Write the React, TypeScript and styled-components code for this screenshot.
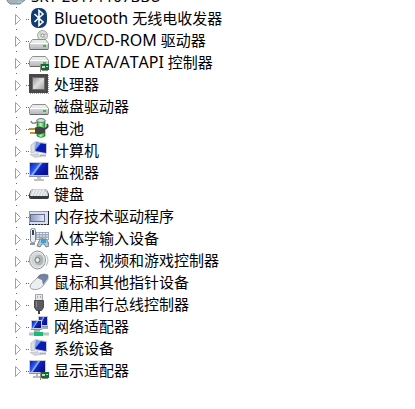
import React from "react";
import styled, { createGlobalStyle } from "styled-components";

const GlobalStyle = createGlobalStyle`
  * { box-sizing: border-box; }
  body {
    margin: 0;
    background: #fff;
    color: #000;
    font: 15px/20px "Noto Sans", "Noto Sans CJK SC", sans-serif;
    font-kerning: none;
  }
`;

const Viewport = styled.main`
  height: 100vh;
  overflow: hidden;
`;
const Tree = styled.div`
  margin-top: -14px;
`;
const RootRow = styled.div`
  display: flex;
  align-items: flex-start;
  height: 22px;
  padding-left: 6px;
`;
const Branches = styled.ul`
  list-style: none;
  margin: 0;
  padding: 0 0 0 12px;
`;
const Branch = styled.li`
  display: flex;
  align-items: flex-start;
  height: 22px;
`;
const Expander = styled.button`
  display: flex;
  width: 17px;
  height: 22px;
  padding: 0;
  border: 0;
  background: transparent;
`;
const Guides = styled.svg`
  display: block;
  overflow: visible;
`;
const Label = styled.span`
  padding-left: 5px;
  white-space: nowrap;
`;
const Latin = styled.span`
  font-size: 16px;
`;
const Glyph = styled.svg`
  display: block;
  flex: none;
  width: 20px;
  height: 20px;
`;
const SharedDefs = styled.svg`
  display: block;
  width: 0;
  height: 0;
`;

const Defs = () => (
  <SharedDefs aria-hidden="true">
    <defs>
      <linearGradient id="screen" x1="0" y1="0" x2="1" y2="0.5">
        <stop offset="0" stopColor="#0a1cb4" />
        <stop offset=".4" stopColor="#2c5cf0" />
        <stop offset=".5" stopColor="#9cc4ff" />
        <stop offset=".58" stopColor="#1226c0" />
        <stop offset="1" stopColor="#06109a" />
      </linearGradient>
      <linearGradient id="metal" x1="0" y1="0" x2="0" y2="1">
        <stop offset="0" stopColor="#f2f2f2" />
        <stop offset="1" stopColor="#b4b5b6" />
      </linearGradient>
      <linearGradient id="chip" x1="0" y1="0" x2="1" y2="1">
        <stop offset="0" stopColor="#9b9b9b" />
        <stop offset=".5" stopColor="#dedede" />
        <stop offset="1" stopColor="#a2a2a2" />
      </linearGradient>
      <linearGradient id="cell" x1="0" y1="0" x2="1" y2="0">
        <stop offset="0" stopColor="#18a72c" />
        <stop offset=".45" stopColor="#b4fcac" />
        <stop offset="1" stopColor="#10a02a" />
      </linearGradient>
      <linearGradient id="memory" x1="0" y1="0" x2="1" y2="0">
        <stop offset="0" stopColor="#8c9abf" />
        <stop offset="1" stopColor="#e6eaf8" />
      </linearGradient>
      <radialGradient id="cone">
        <stop offset="0" stopColor="#888" />
        <stop offset=".5" stopColor="#c4c8ca" />
        <stop offset="1" stopColor="#eef0f1" />
      </radialGradient>
    </defs>
  </SharedDefs>
);

const Board = () => (
  <g>
    <rect x="11" y="12" width="9" height="6" fill="#14683f" />
    <path d="M11.500 12v8M13 18.500h6" stroke="#8b8f70" />
    <path d="M13 14h3v2h-3zM17 14h2v1h-2z" fill="#b8dfc2" />
  </g>
);
const DriveBody = ({ y }: { y: number }) => (
  <g transform={`translate(0 ${y})`}>
    <path d="M3.500 .5h13l3 4v5q0 1-1 1h-17q-1 0-1-1v-5z" fill="url(#metal)" stroke="#8c8e90" />
    <path d="M4 1h12l2.500 3h-17z" fill="#e9eaea" />
    <path d="M1 4.500h18" stroke="#fff" />
    <path d="M1 10.500h18" stroke="#66686a" />
    <path d="M14 7h3" stroke="#2fc04c" strokeWidth="2" />
  </g>
);
const Screen = ({ x, y, w, h }: { x: number; y: number; w: number; h: number }) => (
  <g>
    <rect x={x} y={y} width={w} height={h} fill="#c9ccd4" />
    <path d={`M${x} ${y + h - 0.5}h${w}`} stroke="#8e929c" />
    <rect x={x + 1} y={y + 1} width={w - 2} height={h - 3} fill="url(#screen)" />
  </g>
);
const Pc = () => (
  <g>
    <path d="M2 5l4-3v10l-4 1z" fill="#dde0e6" stroke="#a5a9b2" strokeWidth=".6" />
    <path d="M6 1l12 2v11L5 12z" fill="#c4c9d6" />
    <path d="M7 2.500l10 1.500v9L6.500 11z" fill="#0c1cb0" />
    <path d="M7 2.500l5 .7-5 6z" fill="#6f9cf8" />
    <path d="M1 14.500l8-1 3 3-6 1z" fill="#d3d5da" stroke="#b2b5bd" strokeWidth=".5" />
    <path d="M11 15.500h6" stroke="#aeb1b8" strokeWidth="2" />
  </g>
);

const icons: Record<string, React.ReactNode> = {
  bluetooth: (
    <g>
      <rect x="2" y="0" width="16" height="20" rx="7" fill="#103c72" />
      <path d="M5.500 6l8.500 8-4 3.500v-15l4 3.500-8.500 8" fill="none" stroke="#fff" strokeWidth="1.600" />
    </g>
  ),
  dvd: (
    <g>
      <circle cx="13.500" cy="5.500" r="5" fill="#dcdfe2" stroke="#a5a5a5" />
      <path d="M13.500 5.500l-4-2 2-2zM13.500 5.500l4 2-2 2z" fill="#b0e394" />
      <path d="M13.500 5.500l4-3 1 2z" fill="#d9a9dc" />
      <circle cx="13.500" cy="5.500" r="1.500" fill="#fff" stroke="#888" />
      <DriveBody y={9} />
    </g>
  ),
  ide: <g><DriveBody y={4} /><Board /></g>,
  cpu: (
    <g>
      <path d="M1 19.500h19M19.500 1v19" stroke="#c29b4e" strokeDasharray="1 1" />
      <rect width="19" height="19" fill="#484848" />
      <rect x="3" y="3" width="13" height="13" fill="#6c6c6c" />
      <rect x="4" y="4" width="11" height="11" fill="url(#chip)" />
    </g>
  ),
  disk: <DriveBody y={8} />,
  battery: (
    <g>
      <path d="M8 2h8v16q-4 3-8 0z" fill="url(#cell)" stroke="#167a28" strokeWidth=".7" />
      <ellipse cx="12" cy="2.500" rx="4" ry="2" fill="#d6dde0" stroke="#718079" />
      <path d="M2 3q1 4 6 1" fill="none" stroke="#888" strokeWidth="1.500" />
      <path d="M0 11h6M1 15h6" stroke="#c49334" strokeWidth="2" />
      <path d="M6 9.500l5-1 5 2v4l-5 2-5-1z" fill="#424545" />
      <path d="M15 11q5-1 3-5" fill="none" stroke="#444" strokeWidth="2" />
    </g>
  ),
  computer: <Pc />,
  monitor: (
    <g>
      <Screen x={0} y={0} w={20} h={15} />
      <path d="M8 15h4v2h3v2H5v-2h3z" fill="#bfc2c5" />
    </g>
  ),
  keyboard: (
    <g>
      <path d="M4 5h12q3 1 4 6v2q0 2-2 2H2q-2 0-2-2v-2q1-5 4-6z" fill="#36393c" />
      <path d="M4 5h12q3 1 3 7H1q0-6 3-7z" fill="#d0d3d5" />
      <path d="M4 7h12M3 9h14M2 11h16" stroke="#fff" strokeDasharray="2 1" />
    </g>
  ),
  memory: (
    <g>
      <rect x=".5" y="5.500" width="19" height="13" fill="#d9dff0" stroke="#949db8" />
      <path d="M19.500 5v14" stroke="#20283c" />
      <rect x="1.500" y="8.500" width="14" height="7" fill="url(#memory)" stroke="#66718f" />
      <path d="M0 18.500h20" stroke="#20283c" strokeDasharray="2 1" />
    </g>
  ),
  hid: (
    <g>
      <rect x="7" y="4" width="13" height="8" fill="#9fabb8" />
      <path d="M8 5.500h11M8 8h11M8 10.500h11" stroke="#edf1f4" strokeDasharray="2 1" />
      <rect x="1.500" y=".5" width="5" height="14" rx="2" fill="#eceff2" stroke="#7d8794" />
      <path d="M3 2h2v5H3z" fill="#39434f" />
      <path d="M1 16h5" stroke="#8d969f" strokeWidth="2" />
      <path d="M11 11q2-1 3 0h2q3 0 4 7l-3 1-2-3h-2l-2 3-3-1z" fill="#b5c2d0" stroke="#758798" />
      <path d="M12 11h5v4h-5z" fill="#31a5dd" />
    </g>
  ),
  sound: (
    <g>
      <ellipse cx="8.500" cy="10" rx="8" ry="9" fill="url(#cone)" stroke="#8d9295" />
      <ellipse cx="10" cy="10" rx="5" ry="6" fill="#b0b5b7" stroke="#e3e5e6" />
      <circle cx="8.500" cy="10" r="2.500" fill="#e8eaea" stroke="#71777a" />
      <path d="M17 5q4 5 0 11" fill="none" stroke="#b4b8ba" />
    </g>
  ),
  mouse: (
    <g>
      <path d="M1 14Q2 11 6 8l5-5q4-2 8 0v4q-2 3-5 7-5 5-11 3-2-1-2-3z" fill="#eceff2" stroke="#a2a8ae" />
      <path d="M10 3q5-2 9 0v3l-5 7-1-5-5-2z" fill="#77808d" />
      <path d="M12 5l4 2" stroke="#5c8ce0" strokeWidth="2" />
    </g>
  ),
  usb: (
    <g>
      <path d="M6.500 .5h7v6h-7z" fill="#e6e7e8" stroke="#a4a6a9" />
      <path d="M8 3h1M11 3h1" stroke="#777" />
      <path d="M5.500 6.500h9v7l-2 3h-5l-2-3z" fill="#5b5b61" stroke="#48484e" />
      <path d="M7.500 7v6" stroke="#8a8a91" />
      <path d="M10 16v4" stroke="#404046" strokeWidth="2" />
    </g>
  ),
  network: (
    <g>
      <Screen x={9} y={0} w={10} h={11} />
      <path d="M13 12h6" stroke="#a8abb0" strokeWidth="2" />
      <Screen x={2} y={4} w={11} h={10} />
      <path d="M5 15h6" stroke="#a8abb0" strokeWidth="2" />
      <path d="M0 18h20M9.500 15v4" stroke="#b8c2c0" strokeWidth="3" />
      <path d="M5 18h9" stroke="#17bd70" strokeWidth="4" />
    </g>
  ),
  display: (
    <g>
      <Screen x={0} y={0} w={17} h={14} />
      <path d="M8 14v3M4 17h7" stroke="#b5b8bc" strokeWidth="2" fill="none" />
      <Board />
    </g>
  ),
};

type Item = { icon: string; latin?: string; name: string };

const items: Item[] = [
  { icon: "bluetooth", latin: "Bluetooth", name: "无线电收发器" },
  { icon: "dvd", latin: "DVD/CD-ROM", name: "驱动器" },
  { icon: "ide", latin: "IDE ATA/ATAPI", name: "控制器" },
  { icon: "cpu", name: "处理器" },
  { icon: "disk", name: "磁盘驱动器" },
  { icon: "battery", name: "电池" },
  { icon: "computer", name: "计算机" },
  { icon: "monitor", name: "监视器" },
  { icon: "keyboard", name: "键盘" },
  { icon: "memory", name: "内存技术驱动程序" },
  { icon: "hid", name: "人体学输入设备" },
  { icon: "sound", name: "声音、视频和游戏控制器" },
  { icon: "mouse", name: "鼠标和其他指针设备" },
  { icon: "usb", name: "通用串行总线控制器" },
  { icon: "network", name: "网络适配器" },
  { icon: "computer", name: "系统设备" },
  { icon: "display", name: "显示适配器" },
];

export default function App() {
  return (
    <Viewport>
      <GlobalStyle />
      <Defs />
      <Tree>
        <RootRow>
          <Glyph viewBox="0 0 20 20" aria-hidden="true">
            <path d="M2 4h15l2 10-5 4H4l-3-3z" fill="#a7b0b5" stroke="#7e888e" />
            <path d="M11 16h5" stroke="#8ccbd6" strokeWidth="2" />
          </Glyph>
          <Label>SKY-20171107BBU</Label>
        </RootRow>
        <Branches>
          {items.map(({ icon, latin, name }) => (
            <Branch key={name}>
              <Expander aria-label={`展开 ${name}`}>
                <Guides width="17" height="22" viewBox="0 0 17 22" aria-hidden="true">
                  <path d="M4 -1h1v1h-1zM14 11h1v1h-1zM16 11h1v1h-1z" fill="#666" />
                  <path d="M3.500 6.500v10l5-5z" fill="#fff" stroke="#a0a0a0" />
                </Guides>
              </Expander>
              <Glyph viewBox="0 0 20 20" aria-hidden="true">{icons[icon]}</Glyph>
              <Label>
                {latin && <Latin>{latin}</Latin>}
                {latin && " "}
                {name}
              </Label>
            </Branch>
          ))}
        </Branches>
      </Tree>
    </Viewport>
  );
}
